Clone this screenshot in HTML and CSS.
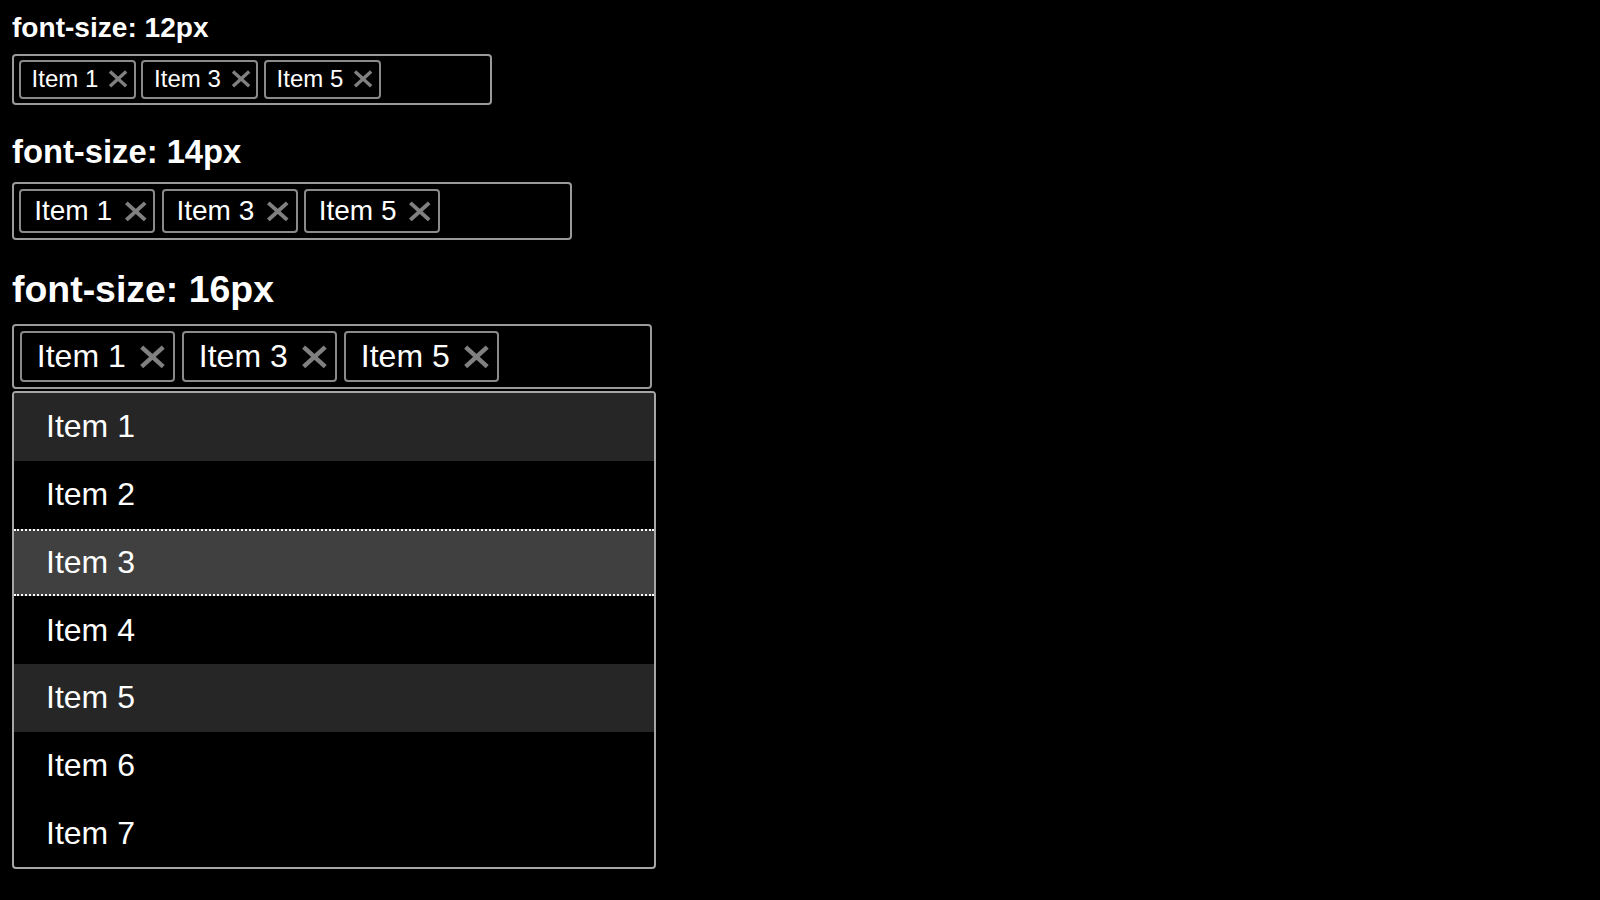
FILE: index.html
```html
<!DOCTYPE html>
<html lang="en">
<head>
<meta charset="utf-8">
<title>Multi-select font sizes</title>
<link rel="stylesheet" href="styles.css">
</head>
<body>
<section class="demo fs12">
  <h3 class="demo-title">font-size: 12px</h3>
  <div class="select">
    <span class="chip"><span class="chip-label">Item 1</span><svg class="chip-x" viewBox="0 0 20 18"><path d="M1.8 1.6L18.2 16.4M18.2 1.6L1.8 16.4"/></svg></span>
    <span class="chip"><span class="chip-label">Item 3</span><svg class="chip-x" viewBox="0 0 20 18"><path d="M1.8 1.6L18.2 16.4M18.2 1.6L1.8 16.4"/></svg></span>
    <span class="chip"><span class="chip-label">Item 5</span><svg class="chip-x" viewBox="0 0 20 18"><path d="M1.8 1.6L18.2 16.4M18.2 1.6L1.8 16.4"/></svg></span>
  </div>
</section>
<section class="demo fs14">
  <h3 class="demo-title">font-size: 14px</h3>
  <div class="select">
    <span class="chip"><span class="chip-label">Item 1</span><svg class="chip-x" viewBox="0 0 20 18"><path d="M1.8 1.6L18.2 16.4M18.2 1.6L1.8 16.4"/></svg></span>
    <span class="chip"><span class="chip-label">Item 3</span><svg class="chip-x" viewBox="0 0 20 18"><path d="M1.8 1.6L18.2 16.4M18.2 1.6L1.8 16.4"/></svg></span>
    <span class="chip"><span class="chip-label">Item 5</span><svg class="chip-x" viewBox="0 0 20 18"><path d="M1.8 1.6L18.2 16.4M18.2 1.6L1.8 16.4"/></svg></span>
  </div>
</section>
<section class="demo fs16">
  <h3 class="demo-title">font-size: 16px</h3>
  <div class="select">
    <span class="chip"><span class="chip-label">Item 1</span><svg class="chip-x" viewBox="0 0 20 18"><path d="M1.8 1.6L18.2 16.4M18.2 1.6L1.8 16.4"/></svg></span>
    <span class="chip"><span class="chip-label">Item 3</span><svg class="chip-x" viewBox="0 0 20 18"><path d="M1.8 1.6L18.2 16.4M18.2 1.6L1.8 16.4"/></svg></span>
    <span class="chip"><span class="chip-label">Item 5</span><svg class="chip-x" viewBox="0 0 20 18"><path d="M1.8 1.6L18.2 16.4M18.2 1.6L1.8 16.4"/></svg></span>
  </div>
  <ul class="dropdown">
    <li class="option selected">Item 1</li>
    <li class="option">Item 2</li>
    <li class="option active">Item 3</li>
    <li class="option">Item 4</li>
    <li class="option selected">Item 5</li>
    <li class="option">Item 6</li>
    <li class="option">Item 7</li>
  </ul>
</section>
</body>
</html>
```
FILE: styles.css
```css
html, body {
  background: #000;
}
body {
  margin: 0;
  padding: 12px;
  font-family: "Liberation Sans", Arial, Helvetica, sans-serif;
  color: #fff;
}
.demo {
  margin-bottom: 28px;
}
.fs12 { font-size: 24px; }
.fs14 { font-size: 28px; }
.fs16 { font-size: 32px; }

.demo-title {
  font-size: 1.17em;
  font-weight: 700;
  line-height: normal;
  margin: 0 0 0.34em;
}

.select {
  box-sizing: border-box;
  width: 20em;
  border: 2px solid #9a9a9a;
  border-radius: 4px;
  padding: 0.17em 0.19em;
  display: flex;
  flex-wrap: wrap;
  gap: 0.22em;
}

.chip {
  display: flex;
  align-items: center;
  border: 2px solid #8a8a8a;
  border-radius: 4px;
  padding: 0.15em 0.22em 0.15em 0.46em;
  line-height: normal;
}

.chip-x {
  width: 0.84em;
  height: 0.74em;
  margin-left: 0.42em;
  fill: none;
  stroke: #808080;
  stroke-width: 3.4;
}

.dropdown {
  list-style: none;
  margin: 2px 0 0;
  padding: 0;
  box-sizing: border-box;
  width: calc(20em + 4px);
  border: 2px solid #a6a6a6;
  border-radius: 4px;
  overflow: hidden;
}

.option {
  padding: 0.48em 1em;
  line-height: normal;
}
.option.selected {
  background: #262626;
}
.option.active {
  background: #404040;
  border-top: 2px dotted #fff;
  border-bottom: 2px dotted #fff;
  padding-top: calc(0.48em - 2px);
  padding-bottom: calc(0.48em - 2px);
}
```
